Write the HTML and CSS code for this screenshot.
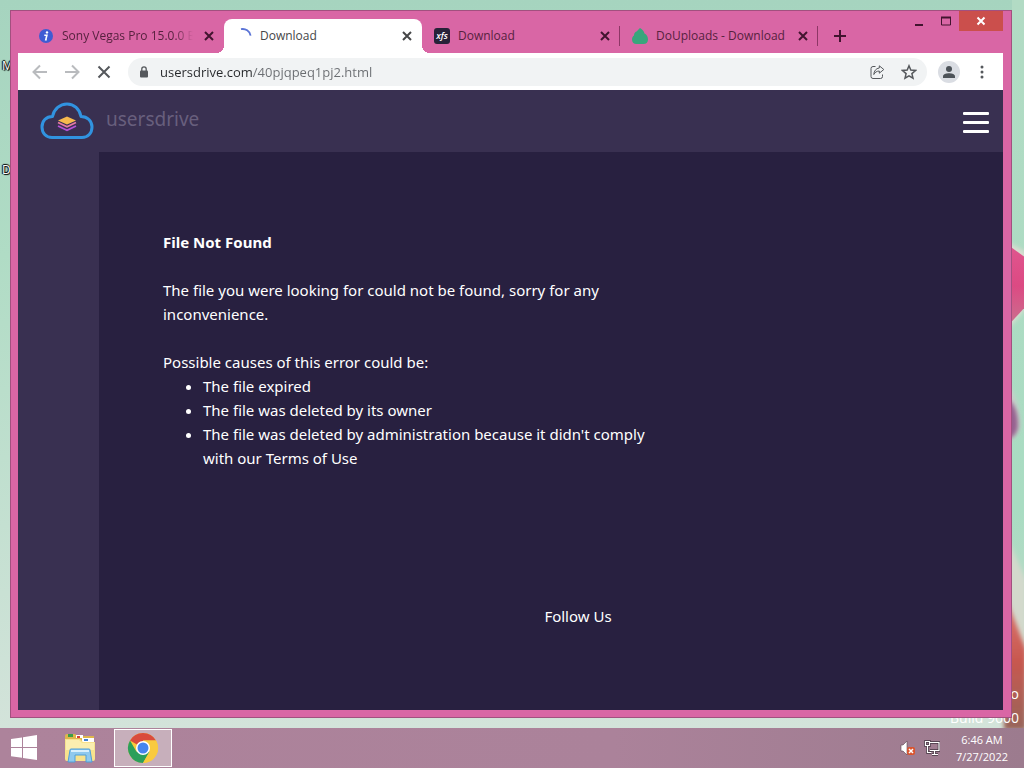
FILE: index.html
```html
<!DOCTYPE html>
<html lang="en">

<head>
    <meta charset="UTF-8">
    <meta name="viewport" content="width=device-width, initial-scale=1.0">
    <title>Download</title>
    <link rel="stylesheet" href="styles.css">
</head>

<body>
    <div class="desktop">
        <!-- wallpaper petals on the right edge -->
        <svg class="petals" viewBox="0 0 40 728" preserveAspectRatio="none" aria-hidden="true">
            <defs>
                <linearGradient id="petal" x1="0" y1="0" x2="0" y2="1">
                    <stop offset="0" stop-color="#e0568f" />
                    <stop offset=".5" stop-color="#dc4a83" />
                    <stop offset="1" stop-color="#c87590" />
                </linearGradient>
                <linearGradient id="redPetal" x1="0" y1="0" x2="0" y2="1">
                    <stop offset="0" stop-color="#dd7b75" />
                    <stop offset=".5" stop-color="#c8584f" />
                    <stop offset="1" stop-color="#97665b" />
                </linearGradient>
                <filter id="soft" x="-50%" y="-20%" width="200%" height="140%">
                    <feGaussianBlur stdDeviation="2" />
                </filter>
            </defs>
            <path d="M20 240L42 252V308L20 334Z" fill="#d9ddd0" filter="url(#soft)" />
            <path d="M20 242L42 258V306L20 330Z" fill="url(#petal)" />
            <path d="M20 380Q34 392 36 426Q32 440 20 444Z" fill="#c9cfcb" filter="url(#soft)" />
            <path d="M20 398Q34 402 34 426Q33 438 20 440Z" fill="#96608f" filter="url(#soft)" />
            <path d="M20 530L42 580V730H20Z" fill="#d3d9cc" filter="url(#soft)" />
            <path d="M20 592L42 650V730H20Z" fill="url(#redPetal)" filter="url(#soft)" />
        </svg>
        <span class="icon-label label-m">M</span>
        <span class="icon-label label-d">D</span>
        <div class="watermark">
            <div>o</div>
            <div>Build 9600</div>
        </div>

        <div class="window">
            <div class="titlebar">
                <div class="tabs">
                    <div class="tab">
                        <svg class="favicon" viewBox="0 0 16 16">
                            <circle cx="8" cy="8" r="7" fill="#3f5bd3" />
                            <circle cx="9" cy="4.4" r="1.2" fill="#fff" />
                            <path d="M6.3 7.2h2.6L7.8 11.6h1" fill="none" stroke="#fff" stroke-width="1.6" />
                        </svg>
                        <button class="tab-title fade">Sony Vegas Pro 15.0.0 Bu</button>
                        <button class="tab-close" aria-label="Close tab"><svg viewBox="0 0 16 16"><path d="M4 4l8 8M12 4l-8 8" /></svg></button>
                    </div>
                    <div class="tab active">
                        <svg class="favicon" viewBox="0 0 16 16">
                            <path d="M5 1.2A8 8 0 0 1 14.6 7.6" fill="none" stroke="#5b74d6" stroke-width="1.8" />
                        </svg>
                        <button class="tab-title">Download</button>
                        <button class="tab-close" aria-label="Close tab"><svg viewBox="0 0 16 16"><path d="M4 4l8 8M12 4l-8 8" /></svg></button>
                    </div>
                    <div class="tab divided">
                        <span class="favicon xfs">xfs</span>
                        <button class="tab-title">Download</button>
                        <button class="tab-close" aria-label="Close tab"><svg viewBox="0 0 16 16"><path d="M4 4l8 8M12 4l-8 8" /></svg></button>
                    </div>
                    <div class="tab divided">
                        <svg class="favicon" viewBox="0 0 16 16">
                            <path d="M8 0C10 1 12 3 12.500 5.500C15 6.500 16 9 16 11.500C16 14.500 14 16 11.500 16H4.500C2 16 0 14.500 0 11.500C0 9.500 1 8 2 7.500C2 5.500 3 4 4.500 3.500C5.500 2.500 7 1 8 0Z" fill="#38a67c" />
                        </svg>
                        <button class="tab-title">DoUploads - Download</button>
                        <button class="tab-close" aria-label="Close tab"><svg viewBox="0 0 16 16"><path d="M4 4l8 8M12 4l-8 8" /></svg></button>
                    </div>
                    <button class="new-tab" aria-label="New tab"><svg viewBox="0 0 16 16"><path d="M8 2v12M2 8h12" /></svg></button>
                </div>
                <div class="controls">
                    <button aria-label="Minimize"><svg viewBox="0 0 12 12"><path d="M2 10h8" stroke-width="2" /></svg></button>
                    <button aria-label="Maximize"><svg viewBox="0 0 12 12"><path d="M1.500 2v8h9V2" /><path d="M1 2.500h10" stroke-width="2" /></svg></button>
                    <button class="close" aria-label="Close"><svg viewBox="0 0 12 12"><path d="M2.500 2.500l7 7M9.500 2.500l-7 7" stroke-width="2" /></svg></button>
                </div>
            </div>

            <div class="toolbar">
                <button class="tool muted" aria-label="Back"><svg viewBox="0 0 16 16"><path d="M15 8H2M8 1.500L1.500 8L8 14.500" /></svg></button>
                <button class="tool muted" aria-label="Forward"><svg viewBox="0 0 16 16"><path d="M1 8h13M8 1.500L14.500 8L8 14.500" /></svg></button>
                <button class="tool" aria-label="Stop"><svg viewBox="0 0 16 16"><path d="M2.500 2.500l11 11M13.500 2.500l-11 11" /></svg></button>
                <div class="address">
                    <svg class="lock" viewBox="0 0 10 12">
                        <rect x="1" y="4.500" width="8" height="7" rx="1" fill="#55585c" />
                        <path d="M2.800 5V3a2.200 2.200 0 0 1 4.400 0v2" fill="none" stroke="#55585c" stroke-width="1.300" />
                    </svg>
                    <input type="text" class="url" aria-label="Address" value="usersdrive.com/40pjqpeq1pj2.html">
                    <button class="tool" aria-label="Share"><svg viewBox="0 0 16 16"><path class="thin" d="M6.500 2.500H4A2 2 0 0 0 2 4.500v8a2 2 0 0 0 2 2h7.500a2 2 0 0 0 2-2V10.500M10.300 1.800L14.800 5.500L10.300 9.200V7C7.500 7 6 8.500 4.800 10.500C5 7 7 4.300 10.300 4Z" /></svg></button>
                    <button class="tool" aria-label="Bookmark"><svg viewBox="0 0 16 16"><path d="M8 1.800l1.800 4.300 4.700.4-3.600 3.100 1.100 4.600L8 11.800l-4 2.400 1.100-4.600-3.600-3.100 4.700-.4z" /></svg></button>
                </div>
                <button class="profile" aria-label="Profile"><svg viewBox="0 0 16 16"><circle cx="8" cy="5" r="3" /><path d="M2 14v-1.500C2 10 5.500 9.300 8 9.300s6 .7 6 3.200V14z" /></svg></button>
                <button class="tool dots" aria-label="Menu"><svg viewBox="0 0 16 16"><circle cx="8" cy="3" r="1.500" /><circle cx="8" cy="8" r="1.500" /><circle cx="8" cy="13" r="1.500" /></svg></button>
            </div>

            <div class="page">
                <header class="site-header">
                    <a href="#" class="brand">
                        <svg class="cloud" viewBox="0 0 54 38">
                            <path d="M12 35.500C6 35.500 2 31 2 25C2 19 6 14.500 12.500 14.500C14 7 20 2 27 2C34 2 39.500 7 41 14.500C47.500 14.500 52 19 52 25C52 31 48 35.500 42 35.500Z" fill="none" stroke="#3193e0" stroke-width="3" stroke-linejoin="round" />
                            <path d="M27 14.500L36 18.500L27 22.500L18 18.500Z" fill="#f6b94e" />
                            <path d="M18 20.500L27 24.700L36 20.500" fill="none" stroke="#e579a5" stroke-width="1.800" />
                            <path d="M18 24L27 28.200L36 24" fill="none" stroke="#b553d6" stroke-width="1.800" />
                        </svg>
                        <span>usersdrive</span>
                    </a>
                    <button class="burger" aria-label="Open menu">
                        <i></i>
                        <i></i>
                        <i></i>
                    </button>
                </header>
                <div class="site-body">
                    <aside class="side"></aside>
                    <main class="content">
                        <div class="message">
                            <h1>File Not Found</h1>
                            <p>The file you were looking for could not be found, sorry for any inconvenience.</p>
                            <p>Possible causes of this error could be:</p>
                            <ul>
                                <li>The file expired</li>
                                <li>The file was deleted by its owner</li>
                                <li>The file was deleted by administration because it didn't comply with our Terms of Use</li>
                            </ul>
                        </div>
                        <div class="follow">Follow Us</div>
                    </main>
                </div>
            </div>
        </div>
    </div>

    <div class="taskbar">
        <button class="start" aria-label="Start">
            <svg viewBox="0 0 26 26"><path d="M0 4L11 2.500V12H0ZM12 2.300L26 0V12H12ZM0 13H11V22.800L0 21.300ZM12 13H26V25L12 23Z" fill="#fff" /></svg>
        </button>
        <button class="task" aria-label="File Explorer">
            <svg viewBox="0 0 32 32">
                <path d="M1 4q0-2 2-2h8l2 2h17v22H1z" fill="#dfb64c" />
                <path d="M4 2h5v3H4z" fill="#3c9d49" />
                <path d="M12 3h7v3h-7z" fill="#fff" />
                <path d="M13 4h3v2h-3z" fill="#d6453a" />
                <path d="M18 6h12v4H18z" fill="#fff" />
                <path d="M20 7h4v2h-4z" fill="#4282d2" />
                <path d="M1 7h15l3 3h12v17q0 2-2 2H3q-2 0-2-2z" fill="#f7e28d" />
                <path d="M2 8h13l3 3h12v7H2z" fill="#fbeeb0" />
                <path d="M6 18q0-1 1-1h18q1 0 1 1l2 12h-6v-7H11v7H4z" fill="#8fc9ee" stroke="#4f9fd8" />
                <path d="M7 19h18" stroke="#d8effc" stroke-width="2" />
            </svg>
        </button>
        <button class="task open" aria-label="Google Chrome">
            <svg viewBox="0 0 32 32">
                <circle cx="16" cy="16" r="15" fill="#f9ca3e" />
                <path d="M16 16L3 8.500A15 15 0 0 1 29 8.500H16Z" fill="#d94b3d" />
                <path d="M3 8.500A15 15 0 0 0 16 31L22.500 19.750L16 16L9.500 19.750Z" fill="#2b9f5b" />
                <path d="M22.500 19.750L16 31A15 15 0 0 0 29 8.500H16Z" fill="#f9ca3e" />
                <circle cx="16" cy="16" r="7" fill="#fff" />
                <circle cx="16" cy="16" r="5.500" fill="#4684ee" />
            </svg>
        </button>
        <div class="tray">
            <svg viewBox="0 0 16 16" aria-label="Volume muted" role="img">
                <path d="M1 5h2l4-4v14l-4-4H1z" fill="#fff" stroke="#5b4652" stroke-width=".6" />
                <rect x="7" y="7" width="8" height="8" rx="2" fill="#d9542f" />
                <path d="M9 9l4 4M13 9l-4 4" stroke="#fff" stroke-width="1.500" />
            </svg>
            <svg viewBox="0 0 16 16" aria-label="Network" role="img">
                <path d="M6 2.500h9v8H6M8 14.500h6M10.500 11v3M1.500 1.500h4v4h-4zM3.500 6v6.500h4" fill="none" stroke="#433540" stroke-width="2.600" />
                <path d="M6 2.500h9v8H6M8 14.500h6M10.500 11v3M1.500 1.500h4v4h-4zM3.500 6v6.500h4" fill="none" stroke="#fff" stroke-width="1.200" />
            </svg>
            <div class="clock">
                <div>6:46 AM</div>
                <div>7/27/2022</div>
            </div>
        </div>
    </div>
</body>

</html>
```
FILE: styles.css
```css
* {
    margin: 0;
    padding: 0;
    box-sizing: border-box;
}

body {
    display: flex;
    flex-direction: column;
    height: 100vh;
    overflow: hidden;
    font-family: 'Open Sans', 'Noto Sans', sans-serif;
    font-size: 12px;
}

button {
    border: none;
    background: none;
    font: inherit;
    color: inherit;
    cursor: pointer;
}

svg {
    display: block;
}

/* desktop */

.desktop {
    flex: 1;
    min-height: 0;
    display: flex;
    position: relative;
    padding: 10px 12px 10px 10px;
    background: linear-gradient(#a6d4bf, #b0dcc5 35%, #d3e3da);
}

.desktop::after {
    content: '';
    position: absolute;
    right: 0;
    bottom: 0;
    top: 0;
    width: 12px;
    background: linear-gradient(#b2dbc4, #a9dcc2 70%, #c9d8cb);
}

.petals {
    position: absolute;
    right: 0;
    top: 0;
    width: 40px;
    height: 100%;
    z-index: 1;
}

.icon-label {
    position: absolute;
    left: 2px;
    color: #fff;
    line-height: 16px;
    text-shadow: 0 0 1px #000, 1px 1px 1px #000, -1px 0 1px #000, 0 -1px 1px #000;
}

.label-m {
    top: 58px;
}

.label-d {
    top: 162px;
}

.watermark {
    position: absolute;
    right: 5px;
    bottom: -2px;
    z-index: 1;
    color: #fff;
    font-size: 14px;
    line-height: 24px;
    text-align: right;
}

/* browser window */

.window {
    flex: 1;
    min-width: 0;
    display: flex;
    flex-direction: column;
    position: relative;
    z-index: 2;
    padding: 0 8px 7px 7px;
    border: 1px solid #a2507f;
    background-color: #d966a5;
}

.titlebar {
    display: flex;
    justify-content: space-between;
    height: 42px;
    flex-shrink: 0;
}

.tabs {
    display: flex;
    align-self: flex-end;
    align-items: center;
    padding-left: 8px;
    color: #57223f;
}

.tab {
    display: flex;
    align-items: center;
    gap: 8px;
    position: relative;
    width: 198px;
    height: 34px;
    padding: 0 7px 0 12px;
}

.tab.active {
    background-color: #fff;
    border-radius: 8px 8px 0 0;
    color: #454648;
}

/* curved feet of the active tab */
.tab.active::before,
.tab.active::after {
    content: '';
    position: absolute;
    bottom: 0;
    width: 8px;
    height: 8px;
}

.tab.active::before {
    left: -8px;
    background: radial-gradient(circle at 0 0, transparent 8px, #fff 8px);
}

.tab.active::after {
    right: -8px;
    background: radial-gradient(circle at 100% 0, transparent 8px, #fff 8px);
}

.tab.divided {
    background: linear-gradient(#8d3766, #8d3766) right center / 1px 20px no-repeat;
}

.favicon {
    width: 16px;
    height: 16px;
    flex-shrink: 0;
}

.xfs {
    border-radius: 3px;
    background-color: #272238;
    color: #fff;
    font-size: 9px;
    font-style: italic;
    font-weight: 600;
    line-height: 15px;
    text-align: center;
}

.tab-title {
    flex: 1;
    min-width: 0;
    white-space: nowrap;
    text-align: left;
    line-height: 18px;
}

.tab-title.fade {
    -webkit-mask-image: linear-gradient(to right, #000 86%, transparent);
    mask-image: linear-gradient(to right, #000 86%, transparent);
}

.tab-close svg,
.new-tab svg {
    width: 16px;
    height: 16px;
    fill: none;
    stroke: #42142f;
    stroke-width: 2;
}

.active .tab-close svg {
    stroke: #454648;
}

.new-tab {
    margin-left: 14px;
}

.controls {
    display: flex;
    align-self: flex-start;
}

.controls button {
    display: flex;
    align-items: center;
    justify-content: center;
    width: 27px;
    height: 20px;
}

.controls .close {
    width: 44px;
    background-color: #cb4f4c;
}

.controls svg {
    width: 12px;
    height: 12px;
    fill: none;
    stroke: #42142f;
}

.controls .close svg {
    stroke: #fff;
}

.toolbar {
    display: flex;
    align-items: center;
    flex-shrink: 0;
    height: 37px;
    padding: 0 13px 0 14px;
    background-color: #fff;
}

.tool {
    width: 16px;
    margin-right: 16px;
}

.tool svg {
    width: 16px;
    height: 16px;
    fill: none;
    stroke: #55585c;
    stroke-width: 2;
}

.tool.muted svg {
    stroke: #b9bbbe;
}

.tool .thin {
    stroke-width: 1;
}

.address {
    flex: 1;
    display: flex;
    align-items: center;
    height: 28px;
    padding-left: 11px;
    border-radius: 14px;
    background-color: #f1f3f4;
}

.address .tool:last-child {
    margin-right: 10px;
}

.address .tool:last-child svg {
    stroke-width: 1.5;
}

.lock {
    width: 10px;
    height: 12px;
    margin-right: 11px;
}

.url {
    flex: 1;
    min-width: 0;
    border: none;
    outline: none;
    font-family: inherit;
    font-size: 13px;
    line-height: 20px;
    /* domain dark, path grey */
    color: transparent;
    background: linear-gradient(to right, #26282b 92px, #6a6d71 92px);
    -webkit-background-clip: text;
    background-clip: text;
}

.profile {
    display: flex;
    align-items: center;
    justify-content: center;
    width: 22px;
    height: 22px;
    margin: 0 14px 0 11px;
    border-radius: 50%;
    background-color: #dadde3;
}

.profile svg {
    width: 16px;
    height: 16px;
    fill: #4c5258;
}

.tool.dots {
    margin-right: 0;
}

.dots svg {
    fill: #55585c;
    stroke: none;
}

/* web page */

.page {
    flex: 1;
    min-height: 0;
    display: flex;
    flex-direction: column;
    overflow: hidden;
    background-color: #282040;
    color: #fff;
    font-family: 'Noto Sans', sans-serif;
    font-size: 15px;
    line-height: 24px;
}

.site-header {
    display: flex;
    align-items: center;
    justify-content: space-between;
    flex-shrink: 0;
    height: 62px;
    padding: 0 14px 0 22px;
    background-color: #393051;
}

.brand {
    display: flex;
    align-items: center;
    gap: 12px;
    color: #685f7d;
    font-size: 19px;
    text-decoration: none;
}

.brand span {
    padding-bottom: 4px;
}

.cloud {
    width: 54px;
    height: 38px;
}

.burger {
    display: flex;
    flex-direction: column;
    gap: 6px;
    padding-top: 3px;
}

.burger i {
    width: 26px;
    height: 3px;
    border-radius: 1px;
    background-color: #fff;
}

.site-body {
    flex: 1;
    min-height: 0;
    display: flex;
}

.side {
    width: 81px;
    flex-shrink: 0;
    background-color: #393051;
}

.content {
    flex: 1;
    min-width: 0;
    padding: 78px 10px 0 64px;
}

.message {
    max-width: 500px;
}

.message h1 {
    font-size: 15px;
    line-height: 24px;
}

.message h1,
.message p:nth-of-type(1) {
    margin-bottom: 24px;
}

.message ul {
    padding-left: 40px;
}

.follow {
    margin-top: 134px;
    text-align: center;
}

/* taskbar */

.taskbar {
    display: flex;
    align-items: center;
    flex-shrink: 0;
    height: 40px;
    padding: 0 16px 0 11px;
    background: linear-gradient(to right, #ad839b, #ab829a 60%, #9c7b8e);
    color: #fff;
}

.start {
    margin-right: 13px;
}

.start svg {
    width: 26px;
    height: 26px;
}

.task {
    display: flex;
    align-items: center;
    justify-content: center;
    width: 60px;
    height: 38px;
    margin-right: 4px;
}

.task.open {
    width: 58px;
    border: 1px solid #fff;
    background-color: #c7afbb;
}

.task svg {
    width: 32px;
    height: 32px;
}

.tray {
    display: flex;
    align-items: center;
    gap: 8px;
    margin-left: auto;
}

.tray svg {
    width: 16px;
    height: 16px;
}

.clock {
    padding-left: 8px;
    font-size: 11px;
    line-height: 17px;
    text-align: center;
}
```
